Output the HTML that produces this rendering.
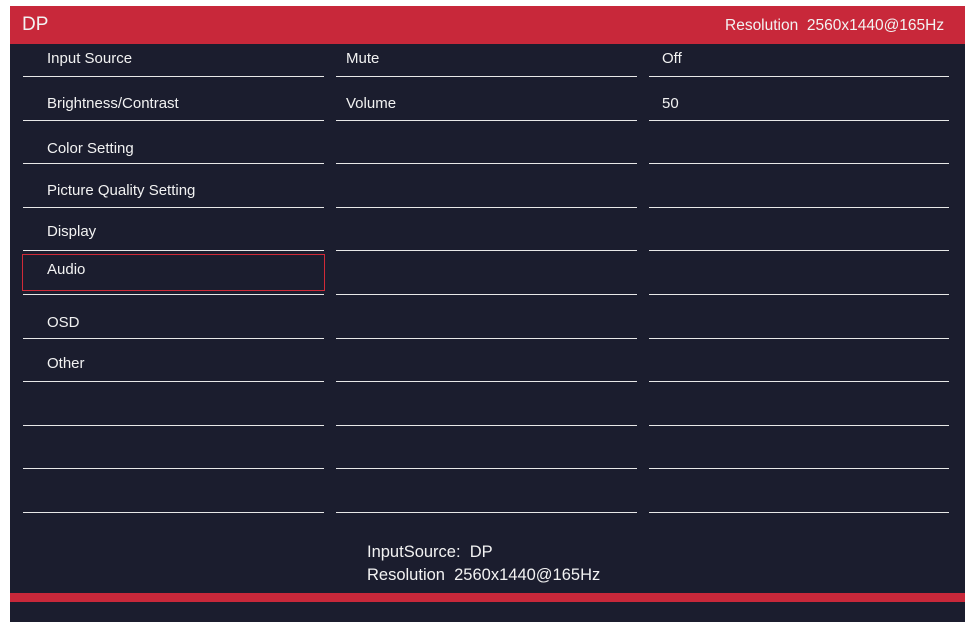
<!DOCTYPE html>
<html><head><style>
body{margin:0;width:975px;height:627px;background:#fff;position:relative;overflow:hidden;font-family:"Liberation Sans",sans-serif;color:#f2f2f2}
.p{position:absolute;left:10px;top:6px;width:955px;height:616px;background:#1b1d2e}
.h{position:absolute;left:10px;top:6px;width:955px;height:38px;background:#c8283a}
.b{position:absolute;left:10px;top:593px;width:955px;height:9px;background:#c8283a}
.l{position:absolute;height:1px;background:#e8e8e8}
.t{position:absolute;font-size:15px;line-height:18px;white-space:nowrap}
</style></head><body>
<div class="p"></div><div class="h"></div><div class="b"></div>
<div class="t" style="left:22px;top:14px;font-size:19px;line-height:22px">DP</div>
<div class="t" style="left:725px;top:17px;font-size:15.5px">Resolution&nbsp; 2560x1440@165Hz</div>
<div id="lines"></div>
<script>
var ys=[76,120,163,207,250,294,338,381,425,468,512],xs=[[23,301],[336,301],[649,300]],h='';
ys.forEach(function(y){xs.forEach(function(x){h+='<div class="l" style="left:'+x[0]+'px;top:'+y+'px;width:'+x[1]+'px"></div>';});});
document.getElementById('lines').innerHTML=h;
</script>
<div style="position:absolute;left:22px;top:254px;width:301px;height:35px;border:1.5px solid #d02a38"></div>
<div class="t" style="left:47px;top:50px">Input Source</div>
<div class="t" style="left:47px;top:95px">Brightness/Contrast</div>
<div class="t" style="left:47px;top:140px">Color Setting</div>
<div class="t" style="left:47px;top:182px">Picture Quality Setting</div>
<div class="t" style="left:47px;top:223px">Display</div>
<div class="t" style="left:47px;top:261px">Audio</div>
<div class="t" style="left:47px;top:314px">OSD</div>
<div class="t" style="left:47px;top:355px">Other</div>
<div class="t" style="left:346px;top:50px">Mute</div>
<div class="t" style="left:346px;top:95px">Volume</div>
<div class="t" style="left:662px;top:50px">Off</div>
<div class="t" style="left:662px;top:95px">50</div>
<div class="t" style="left:367px;top:542px;font-size:16.5px;line-height:20px">InputSource:&nbsp; DP</div>
<div class="t" style="left:367px;top:565px;font-size:16.5px;line-height:20px">Resolution&nbsp; 2560x1440@165Hz</div>
</body></html>
